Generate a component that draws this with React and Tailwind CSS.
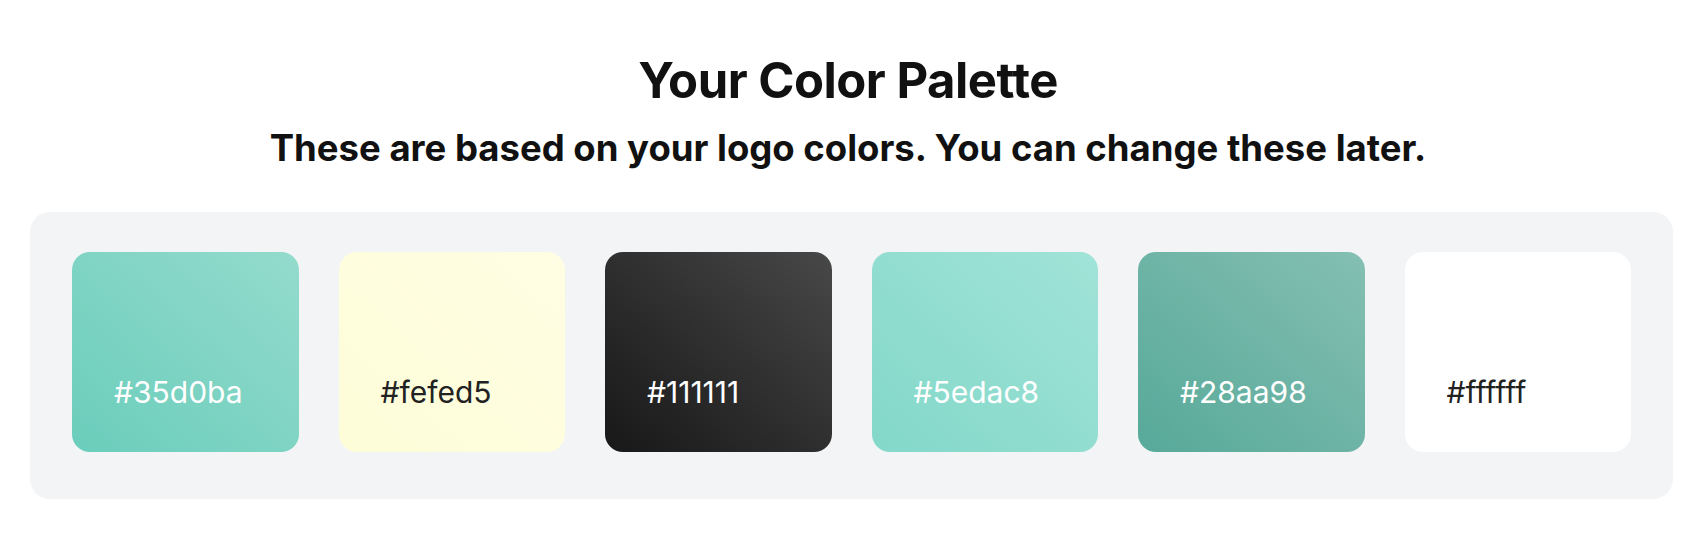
import React from 'react';

const swatches = [
  { hex: '#35d0ba', bg: 'bg-linear-to-tr from-[#6acdbb] to-[#93dbcd]', text: 'text-white' },
  { hex: '#fefed5', bg: 'bg-linear-to-tr from-[#fdfdd8] to-[#fffde3]', text: 'text-[#222222]' },
  { hex: '#111111', bg: 'bg-linear-to-tr from-[#181818] to-[#484848]', text: 'text-white' },
  { hex: '#5edac8', bg: 'bg-linear-to-tr from-[#82d8c9] to-[#a1e3d8]', text: 'text-white' },
  { hex: '#28aa98', bg: 'bg-linear-to-tr from-[#56a999] to-[#84bfb3]', text: 'text-white' },
  { hex: '#ffffff', bg: 'bg-white', text: 'text-[#222222]' },
];

const Swatch = ({ hex, bg, text }) => (
  <div className={`flex-1 h-[200px] rounded-[18px] flex items-end pl-[42px] pb-[42px] ${bg}`}>
    <span className={`text-[30px] leading-9 ${text}`} style={{ fontFamily: 'Inter, sans-serif' }}>
      {hex}
    </span>
  </div>
);

const App = () => {
  return (
    <div className="min-h-[538px] bg-white pt-[51px]" style={{ fontFamily: 'Inter, "Noto Sans", sans-serif' }}>
      {/* Heading */}
      <h1 className="text-center text-[49px] leading-[60px] font-bold text-[#111111] tracking-[-0.5px]">
        Your Color Palette
      </h1>
      <p className="text-center text-[36.5px] leading-[44px] font-bold text-[#111111] mt-[15px]">
        These are based on your logo colors. You can change these later.
      </p>

      {/* Palette */}
      <div className="ml-[30px] mr-[23px] mt-[42px] rounded-[20px] bg-[#f3f4f6] px-[42px] pt-10 pb-[47px] flex gap-10">
        {swatches.map(s => (
          <Swatch key={s.hex} {...s} />
        ))}
      </div>
    </div>
  );
};

export default App;
